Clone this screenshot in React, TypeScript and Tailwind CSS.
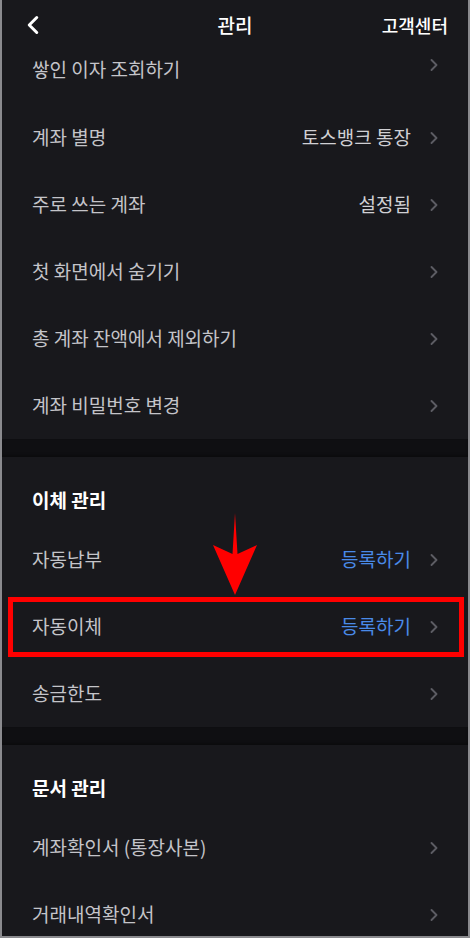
import { ChevronLeft, ChevronRight } from "lucide-react"

type RowProps = {
  label: string
  value?: string
  blue?: boolean
  first?: boolean
}

const FONT = { fontFamily: '"Noto Sans CJK KR", "Noto Sans", sans-serif' }

const Row = ({ label, value, blue, first }: RowProps) => (
  <div className={`flex items-center justify-between pl-[30px] pr-[24px] ${first ? "h-[54px] items-start pt-[5px]" : "h-[67px]"}`}>
    <span className="text-[19px] text-[#c4c4c9]">{label}</span>
    <div className="flex items-center gap-[13px]">
      {value && (
        <span className={`text-[19px] ${blue ? "text-[#4a8ae8]" : "text-[#d0d0d4]"}`}>{value}</span>
      )}
      <ChevronRight size={20} strokeWidth={2.3} className="text-[#5c5c63]" />
    </div>
  </div>
)

const Divider = () => (
  <div className="h-[18px] bg-[#0f0f12] shadow-[inset_0_-2px_3px_rgba(0,0,0,0.3)]" />
)

const SectionTitle = ({ title }: { title: string }) => (
  <div className="h-[69px] pl-[30px] pt-[29px] text-[19px] font-bold text-white">{title}</div>
)

export default function App() {
  return (
    <div style={FONT} className="relative h-[938px] w-[470px] overflow-hidden border-x-2 border-b-2 border-[#8a8a8e] bg-[#18181c]">
      <div className="flex h-[50px] items-center justify-between pl-[16px] pr-[20px]">
        <ChevronLeft size={30} strokeWidth={2.4} className="text-white" />
        <span className="absolute left-1/2 -translate-x-1/2 text-[19px] font-medium text-white">관리</span>
        <span className="text-[18px] font-medium text-white">고객센터</span>
      </div>

      <Row first label="쌓인 이자 조회하기" />
      <Row label="계좌 별명" value="토스뱅크 통장" />
      <Row label="주로 쓰는 계좌" value="설정됨" />
      <Row label="첫 화면에서 숨기기" />
      <Row label="총 계좌 잔액에서 제외하기" />
      <Row label="계좌 비밀번호 변경" />

      <Divider />
      <SectionTitle title="이체 관리" />
      <Row label="자동납부" value="등록하기" blue />
      <Row label="자동이체" value="등록하기" blue />
      <Row label="송금한도" />

      <Divider />
      <SectionTitle title="문서 관리" />
      <Row label="계좌확인서 (통장사본)" />
      <Row label="거래내역확인서" />

      {/* annotation overlay */}
      <div className="absolute left-[6px] top-[597px] h-[60px] w-[456px] border-[5px] border-[#ff0000]" />
      <svg className="absolute left-[208px] top-[512px]" width="50" height="86" viewBox="0 0 50 86">
        <path d="M25 1 L27.5 42 L47 33 L25 83 L3 33 L22.5 42 Z" fill="#ff0000" />
      </svg>
    </div>
  )
}
